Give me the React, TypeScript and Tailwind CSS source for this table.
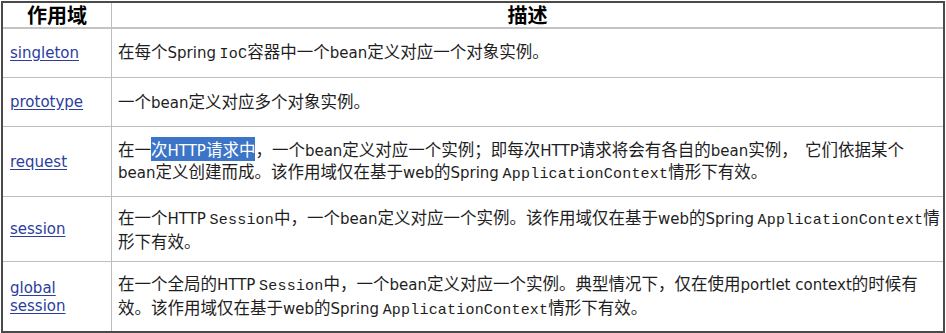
import React from 'react';

const cjk = '[font-family:"Noto_Sans_CJK_SC","DejaVu_Sans",sans-serif]';

// Verdana-like latin inside Chinese text
const V: React.FC<{ children: React.ReactNode }> = ({ children }) => (
  <span className="[font-family:'DejaVu_Sans',sans-serif] text-[15px]">{children}</span>
);

// SimSun-like fixed width latin
const M: React.FC<{ children: React.ReactNode }> = ({ children }) => (
  <span className="[font-family:'Liberation_Mono',monospace] text-[15px] tracking-[0.2px]">{children}</span>
);

const Link: React.FC<{ children: React.ReactNode }> = ({ children }) => (
  <a className="text-[#2b3d9e] underline underline-offset-2 [font-family:'DejaVu_Sans',sans-serif] text-[15px] leading-[18px]">
    {children}
  </a>
);

type Row = { scope: React.ReactNode; desc: React.ReactNode; h: string };

const rows: Row[] = [
  {
    scope: 'singleton',
    h: 'h-[49px]',
    desc: (
      <>
        在每个<V>Spring</V> <M>IoC</M>容器中一个<V>bean</V>定义对应一个对象实例。
      </>
    ),
  },
  {
    scope: 'prototype',
    h: 'h-[49px]',
    desc: (
      <>
        一个<V>bean</V>定义对应多个对象实例。
      </>
    ),
  },
  {
    scope: 'request',
    h: 'h-[70px]',
    desc: (
      <>
        在一
        <span className="bg-[#3c74c8] text-white">
          次<V>HTTP</V>请求中
        </span>
        ，一个<V>bean</V>定义对应一个实例；即每次<V>HTTP</V>请求将会有各自的<V>bean</V>实例，&nbsp;&nbsp;它们依据某个
        <br />
        <V>bean</V>定义创建而成。该作用域仅在基于<V>web</V>的<V>Spring</V> <M>ApplicationContext</M>情形下有效。
      </>
    ),
  },
  {
    scope: 'session',
    h: 'h-[65px]',
    desc: (
      <>
        在一个<V>HTTP</V> <M>Session</M>中，一个<V>bean</V>定义对应一个实例。该作用域仅在基于<V>web</V>的<V>Spring</V> <M>ApplicationContext</M>情
        <br />
        形下有效。
      </>
    ),
  },
  {
    scope: (
      <>
        global
        <br />
        session
      </>
    ),
    h: 'h-[69px]',
    desc: (
      <>
        在一个全局的<V>HTTP</V> <M>Session</M>中，一个<V>bean</V>定义对应一个实例。典型情况下，仅在使用<V>portlet context</V>的时候有
        <br />
        效。该作用域仅在基于<V>web</V>的<V>Spring</V> <M>ApplicationContext</M>情形下有效。
      </>
    ),
  },
];

const App: React.FC = () => {
  return (
    <div className="w-[946px] h-[333px] bg-white pt-[1px] pl-[1px]">
      <div className={`w-[944px] border-2 border-[#4a4a4a] ${cjk} text-[#1e1e1e]`}>
        {/* Header */}
        <div className="grid grid-cols-[109px_1fr] h-[26px] border-b-2 border-[#c4c4c4]">
          <div className="border-r border-[#bdbdbd] flex items-center justify-center text-[20px] font-bold leading-none text-black">
            作用域
          </div>
          <div className="flex items-center justify-center text-[20px] font-bold leading-none text-black">描述</div>
        </div>

        {rows.map((r, i) => (
          <div
            key={i}
            className={`grid grid-cols-[109px_1fr] ${r.h} ${i < rows.length - 1 ? 'border-b border-[#bdbdbd]' : ''}`}
          >
            <div className="border-r border-[#bdbdbd] flex items-center pl-[7px]">
              <Link>{r.scope}</Link>
            </div>
            <div className="flex items-center pl-[6px] text-[16.5px] leading-[20px] whitespace-nowrap">
              <div>{r.desc}</div>
            </div>
          </div>
        ))}
      </div>
    </div>
  );
};

export default App;
